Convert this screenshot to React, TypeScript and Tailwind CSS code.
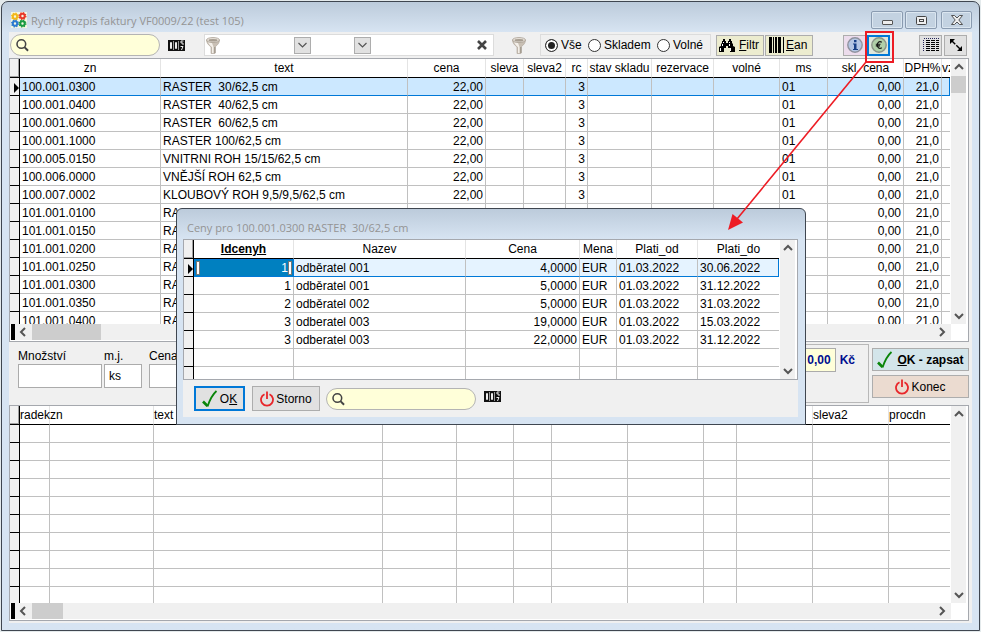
import React from 'react';

const FONT = "font-['Liberation_Sans',Arial,sans-serif]";

type Col = { name: string; w?: string; align?: string; head?: string };

const ITEM_COLS: Col[] = [
  { name: 'zn', w: 'w-[141px]' },
  { name: 'text' },
  { name: 'cena', w: 'w-[78px]', align: 'text-right' },
  { name: 'sleva', w: 'w-[38px]' },
  { name: 'sleva2', w: 'w-[42px]' },
  { name: 'rc', w: 'w-[22px]', align: 'text-right' },
  { name: 'stav skladu', w: 'w-[64px]' },
  { name: 'rezervace', w: 'w-[62px]' },
  { name: 'volné', w: 'w-[66px]' },
  { name: 'ms', w: 'w-[48px]' },
  { name: 'skl. cena', w: 'w-[76px]', align: 'text-right' },
  { name: 'DPH%', w: 'w-[38px]', align: 'text-right' },
  { name: 'vz', w: 'w-[8px]', head: 'text-left' },
];

type Item = { zn: string; text: string; cena?: string; rc?: string; ms?: string };

const ITEMS: Item[] = [
  { zn: '100.001.0300', text: 'RASTER  30/62,5 cm', cena: '22,00', rc: '3', ms: '01' },
  { zn: '100.001.0400', text: 'RASTER  40/62,5 cm', cena: '22,00', rc: '3', ms: '01' },
  { zn: '100.001.0600', text: 'RASTER  60/62,5 cm', cena: '22,00', rc: '3', ms: '01' },
  { zn: '100.001.1000', text: 'RASTER 100/62,5 cm', cena: '22,00', rc: '3', ms: '01' },
  { zn: '100.005.0150', text: 'VNITRNI ROH 15/15/62,5 cm', cena: '22,00', rc: '3', ms: '01' },
  { zn: '100.006.0000', text: 'VNĚJŠÍ ROH 62,5 cm', cena: '22,00', rc: '3', ms: '01' },
  { zn: '100.007.0002', text: 'KLOUBOVÝ ROH 9,5/9,5/62,5 cm', cena: '22,00', rc: '3', ms: '01' },
  { zn: '101.001.0100', text: 'RA' },
  { zn: '101.001.0150', text: 'RA' },
  { zn: '101.001.0200', text: 'RA' },
  { zn: '101.001.0250', text: 'RA' },
  { zn: '101.001.0300', text: 'RA' },
  { zn: '101.001.0350', text: 'RA' },
  { zn: '101.001.0400', text: 'RA' },
];

const ITEM_ROWS = ITEMS.map(({ zn, text, cena = '', rc = '', ms = '' }) => [
  zn, text, cena, '', '', rc, '', '', '', ms, '0,00', '21,0', '',
]);

const LINE_COLS: Col[] = [
  { name: 'radek', w: 'w-[30px]', head: 'text-left' },
  { name: 'zn', w: 'w-[104px]', head: 'text-left' },
  { name: 'text', head: 'text-left' },
  { name: '', w: 'w-[74px]' },
  { name: '', w: 'w-[57px]' },
  { name: '', w: 'w-[38px]' },
  { name: '', w: 'w-[76px]' },
  { name: '', w: 'w-[76px]' },
  { name: '', w: 'w-[33px]' },
  { name: '', w: 'w-[76px]' },
  { name: 'sleva2', w: 'w-[76px]', head: 'text-left' },
  { name: 'procdn', w: 'w-[61px]', head: 'text-left' },
];

const LINE_ROWS = Array.from({ length: 10 }, () => LINE_COLS.map(() => ''));

const PRICE_COLS: Col[] = [
  { name: 'Idcenyh', w: 'w-[100px]', align: 'text-right', head: 'text-center font-bold underline' },
  { name: 'Nazev' },
  { name: 'Cena', w: 'w-[114px]', align: 'text-right' },
  { name: 'Mena', w: 'w-[37px]' },
  { name: 'Plati_od', w: 'w-[81px]' },
  { name: 'Plati_do', w: 'w-[81px]' },
];

const PRICE_ROWS = [
  ['1', 'odběratel 001', '4,0000', 'EUR', '01.03.2022', '30.06.2022'],
  ['1', 'odběratel 001', '5,0000', 'EUR', '01.03.2022', '31.12.2022'],
  ['2', 'odběratel 002', '5,0000', 'EUR', '01.03.2022', '31.03.2022'],
  ['3', 'odberatel 003', '19,0000', 'EUR', '01.03.2022', '15.03.2022'],
  ['3', 'odberatel 003', '22,0000', 'EUR', '01.03.2022', '31.12.2022'],
  ['', '', '', '', '', ''],
  ['', '', '', '', '', ''],
];

function Chevron({ dir }: { dir: 'up' | 'down' | 'left' | 'right' }) {
  const d = {
    up: 'M1 7l4-4 4 4',
    down: 'M1 3l4 4 4-4',
    left: 'M7 1L3 5l4 4',
    right: 'M3 1l4 4-4 4',
  }[dir];
  return (
    <svg width="10" height="10" viewBox="0 0 10 10" fill="none" stroke="#555" strokeWidth="2">
      <path d={d} />
    </svg>
  );
}

function Grid({
  cols,
  rows,
  label,
  selected,
  editing,
  thumbV,
  hscroll,
}: {
  cols: Col[];
  rows: string[][];
  label: string;
  selected?: string;
  editing?: boolean;
  thumbV?: boolean;
  hscroll?: string;
}) {
  return (
    <div className="flex min-h-0 flex-1 flex-col border border-[#a5a8ae] bg-white">
      <div className="flex min-h-0 flex-1">
        <div className="min-w-0 flex-1 overflow-hidden">
          <table aria-label={label} className="w-full table-fixed border-separate border-spacing-0">
            <colgroup>
              <col className="w-[10px]" />
              {cols.map((c, i) => (
                <col key={i} className={c.w} />
              ))}
            </colgroup>
            <thead>
              <tr>
                <th className="h-[19px] border-b border-r border-black bg-[#f0f0f0] p-0 shadow-[inset_-1px_-1px_0_#a0a0a0]" />
                {cols.map((c, i) => (
                  <th
                    key={i}
                    className={`h-[19px] overflow-visible border-b border-b-black p-0 leading-[18px] whitespace-nowrap ${
                      i < cols.length - 1 ? 'border-r border-r-[#e4e4e4]' : ''
                    } ${c.head?.includes('bold') ? '' : 'font-normal'} ${c.head ?? 'text-center'}`}
                  >
                    {c.name}
                  </th>
                ))}
              </tr>
            </thead>
            <tbody>
              {rows.map((r, ri) => {
                const on = ri === 0 && selected;
                return (
                  <tr key={ri} className={on ? selected : ''}>
                    <td className="h-[18px] border-b border-r border-black bg-[#f0f0f0] p-0">
                      {on ? (
                        <svg width="9" height="13" viewBox="0 0 9 13" className="block">
                          <path d="M4 3l5 5-5 5z" fill="#000" />
                        </svg>
                      ) : null}
                    </td>
                    {r.map((v, i) => {
                      const edit = on && editing && i === 0;
                      return (
                        <td
                          key={i}
                          className={`h-[18px] overflow-hidden leading-[15px] whitespace-pre ${
                            edit
                              ? 'border border-[#0078d7] bg-[#0080c0] p-0 text-white'
                              : `border-b px-[2px] pt-[2px] pb-0 ${on ? 'border-b-[#0078d7]' : 'border-b-[#c0c0c0]'} ${
                                  i < cols.length - 1
                                    ? 'border-r border-r-[#c0c0c0]'
                                    : on
                                      ? 'border-r border-r-[#0078d7]'
                                      : ''
                                }`
                          } ${cols[i].align ?? ''}`}
                        >
                          {edit ? (
                            <span className="flex h-4 items-center justify-between px-px">
                              <span className="h-[14px] w-1 border border-[#777] bg-white" />
                              <span className="flex items-center">
                                {v}
                                <span className="h-[14px] w-1 border border-[#777] bg-white" />
                              </span>
                            </span>
                          ) : (
                            v
                          )}
                        </td>
                      );
                    })}
                  </tr>
                );
              })}
            </tbody>
          </table>
        </div>
        <div className="mr-[2px] ml-px flex w-[15px] shrink-0 flex-col items-center justify-between bg-[#f0f0f0] py-[3px]">
          <div className="flex w-full flex-col items-center gap-1">
            <Chevron dir="up" />
            {thumbV ? <div className="h-[17px] w-full bg-[#cdcdcd]" /> : null}
          </div>
          <Chevron dir="down" />
        </div>
      </div>
      {hscroll ? (
        <div className="mb-px flex h-4 shrink-0 items-stretch pr-[17px] pl-px">
          <div className="w-1 bg-black" />
          <div className="flex flex-1 items-center justify-between bg-[#f0f0f0] pr-1 pl-[3px]">
            <div className="flex h-full items-center gap-1">
              <Chevron dir="left" />
              <div className={`h-full bg-[#cdcdcd] ${hscroll}`} />
            </div>
            <Chevron dir="right" />
          </div>
        </div>
      ) : null}
    </div>
  );
}

function Search({ label }: { label: string }) {
  return (
    <label className="flex h-[22px] w-[150px] items-center rounded-full border border-[#b4b4b4] bg-[#ffffd9] pl-[5px]">
      <svg width="14" height="14" viewBox="0 0 14 14" fill="none" stroke="#444" strokeWidth="1.7">
        <circle cx="5.9" cy="5.9" r="4.8" />
        <path d="M9.300 9.300l4 4" strokeWidth="2.200" />
      </svg>
      <input aria-label={label} className="w-full bg-transparent px-1 outline-none" />
    </label>
  );
}

function Counter() {
  return (
    <svg width="17" height="11" viewBox="0 0 17 11" fill="none">
      <path d="M0 0h17v11H0z" fill="#111" />
      <path d="M2.500 2.500h1v6h-1zM7.500 2.500h1v6h-1z" stroke="#eee" />
      <path d="M5.500 1v9M10.500 1v9" stroke="#999" />
      <path d="M15.500 1h-2.500v2h2v2M12.500 6.500h2.500L13.500 10" stroke="#eee" />
    </svg>
  );
}

function Funnel() {
  return (
    <svg width="14" height="17" viewBox="0 0 14 17">
      <path d="M.5 3c0 3 2 5 4.500 7v6.500h4V10c2.500-2 4.500-4 4.500-7z" fill="#c9c0b5" stroke="#aca397" strokeWidth=".6" />
      <path d="M2 5c1 2.500 2.500 4 4 5v6h1.500V10L6 6z" fill="#f3efe9" />
      <path d="M9 10v6" stroke="#8d8478" />
      <ellipse cx="7" cy="3" rx="6.500" ry="2.500" fill="#e6e0d8" stroke="#a39a8e" strokeWidth=".7" />
      <ellipse cx="7" cy="3.200" rx="4.500" ry="1.300" fill="#a79e92" />
    </svg>
  );
}

function Check() {
  return (
    <svg width="16" height="18" viewBox="0 0 16 18" fill="none" stroke="#0a850a">
      <path d="M1 11.500l4.500 4.500" strokeWidth="2.600" />
      <path d="M5.500 16.500C7 12 10 5 14.500 1" strokeWidth="1.800" />
    </svg>
  );
}

function Power() {
  return (
    <svg width="14" height="16" viewBox="0 0 14 16" fill="none" stroke="#e8262a" strokeWidth="1.800">
      <path d="M4.500 3.200a6 6 0 1 0 5 0" />
      <path d="M7 .5v7.500" />
    </svg>
  );
}

function Gear({ x, y, c }: { x: number; y: number; c: string }) {
  return (
    <g transform={`translate(${x} ${y})`} fill="none" stroke={c}>
      <circle r="2.200" strokeWidth="2" />
      <circle r="3.300" strokeWidth="1.400" strokeDasharray="1.300 1.292" />
    </g>
  );
}

function DropButton({ label }: { label: string }) {
  return (
    <button aria-label={label} className="flex h-[17px] w-[17px] items-center justify-center border border-[#adadad] bg-[#e1e1e1]">
      <svg width="9" height="6" viewBox="0 0 9 6" fill="none" stroke="#555" strokeWidth="1.200">
        <path d="M.5 1l4 4 4-4" />
      </svg>
    </button>
  );
}

function Radio({ text, on }: { text: string; on?: boolean }) {
  return (
    <label className="flex items-center gap-[3px]">
      <input
        type="radio"
        name="stock"
        defaultChecked={on}
        className="h-[13px] w-[13px] appearance-none rounded-full border border-[#333] bg-white checked:bg-[#222] checked:shadow-[inset_0_0_0_2px_#fff]"
      />
      {text}
    </label>
  );
}

const WIN_BTN =
  'flex h-[18px] items-center justify-center rounded-[2px] border border-[#8a9bb0] bg-[#c3d2e1] shadow-[inset_0_0_0_1px_#dbe6f0]';

function PriceDialog() {
  return (
    <section
      aria-label="Ceny"
      className="absolute top-[208px] left-[176px] flex h-[217px] w-[630px] flex-col rounded-t-[6px] border border-[#3f4650] bg-[#d7e4f2] bg-linear-to-b from-[#bccbdb] to-[#d7e4f2] to-[30px] pr-[7px] pb-[7px] pl-[6px]"
    >
      <h2 className="h-[30px] shrink-0 pt-[2px] pl-1 font-['Open_Sans',sans-serif] text-[11px] leading-[34px] whitespace-pre text-[#949494]">
        Ceny pro 100.001.0300 RASTER  30/62,5 cm
      </h2>
      <div className="flex min-h-0 flex-1 flex-col bg-[#f0f0f0]">
        <div className="flex h-[141px] flex-col">
          <Grid cols={PRICE_COLS} rows={PRICE_ROWS} label="Ceny" selected="bg-[#e5f3ff]" editing />
        </div>
        <div className="flex items-center pt-[6px] pl-[11px]">
          <button className="flex h-[25px] w-[51px] items-center justify-center gap-[2px] border-2 border-[#0078d7] bg-[#e1e1e1]">
            <Check />
            <span>
              O<u>K</u>
            </span>
          </button>
          <button className="ml-[7px] flex h-[25px] w-[68px] items-center justify-center gap-[2px] border border-[#adadad] bg-[#e1e1e1]">
            <Power />
            Storno
          </button>
          <div className="ml-[6px]">
            <Search label="Hledat cenu" />
          </div>
          <div className="ml-2 pb-1">
            <Counter />
          </div>
        </div>
      </div>
    </section>
  );
}

export default function App() {
  return (
    <div className={`relative flex h-screen flex-col bg-[#e4eaec] p-px text-[12px] leading-4 text-black ${FONT}`}>
      <main className="flex min-h-0 flex-1 flex-col rounded-t-[7px] border border-[#3f4650] bg-[#d7e4f2] bg-linear-to-b from-[#bccbdb] to-[#d7e4f2] to-[30px] px-[7px] pb-[7px]">
        <header className="flex h-[30px] shrink-0 items-start pl-[2px]">
          <svg width="16" height="16" viewBox="0 0 16 16" className="mt-[10px]">
            <path d="M0 0h16v16H0z" fill="#f4f6e0" />
            <Gear x={4} y={4.5} c="#f2b81a" />
            <Gear x={11.5} y={4} c="#e8382a" />
            <Gear x={4} y={11.5} c="#2c7ad0" />
            <Gear x={11.5} y={11.5} c="#199a43" />
          </svg>
          <h1 className="ml-1 pt-[10px] font-['Open_Sans',sans-serif] text-[11px] leading-[18px] text-[#949494]">
            Rychlý rozpis faktury VF0009/22 (test 105)
          </h1>
          <div className="mt-[9px] ml-auto flex">
            <button aria-label="Minimalizovat" className={`${WIN_BTN} w-[32px]`}>
              <span className="mt-1 h-[5px] w-[11px] rounded-[1px] border border-[#555] bg-[#eee]" />
            </button>
            <button aria-label="Maximalizovat" className={`${WIN_BTN} ml-[2px] w-[32px]`}>
              <svg width="11" height="9" viewBox="0 0 11 9" fill="#eee" stroke="#444">
                <rect x=".5" y=".5" width="10" height="8" rx="1" />
                <rect x="3.500" y="3.500" width="4" height="2" />
              </svg>
            </button>
            <button aria-label="Zavřít" className={`${WIN_BTN} ml-1 w-[31px]`}>
              <svg width="12" height="10" viewBox="0 0 12 10" fill="#eee" stroke="#444" strokeWidth=".9">
                <path d="M.5.5h3L6 3 8.500.5h3L7.800 5l3.700 4.500h-3L6 7 3.500 9.500h-3L4.200 5z" />
              </svg>
            </button>
          </div>
        </header>

        <div className="flex min-h-0 flex-1 flex-col bg-[#f0f0f0] pr-[3px] pb-[2px]">
          <div className="flex h-[26px] shrink-0 items-center pr-[2px] pl-px">
            <Search label="Hledat" />
            <div className="ml-2">
              <Counter />
            </div>
            <div className="ml-[19px] flex h-[22px] w-[290px] items-center border border-[#dcdcdc] bg-white pl-px">
              <Funnel />
              <div className="ml-[74px]">
                <DropButton label="Pole" />
              </div>
              <div className="ml-[43px]">
                <DropButton label="Podmínka" />
              </div>
              <button aria-label="Zrušit filtr" className="mr-[6px] ml-auto">
                <svg width="10" height="10" viewBox="0 0 10 10" stroke="#444" strokeWidth="2.600">
                  <path d="M1 1l8 8M9 1L1 9" />
                </svg>
              </button>
            </div>
            <div className="ml-[18px]">
              <Funnel />
            </div>
            <div className="ml-[14px] flex h-[22px] w-[171px] items-center justify-between border border-[#dcdcdc] pr-[7px] pl-1">
              <Radio text="Vše" on />
              <Radio text="Skladem" />
              <Radio text="Volné" />
            </div>
            <button className="ml-[5px] flex h-[21px] w-[48px] items-center gap-1 border border-[#adadad] bg-[#ececcf] pl-[2px]">
              <svg width="16" height="13" viewBox="0 0 16 13">
                <path d="M4 0h2v2h1v2h2V2h1V0h2v2h1v2l1 1v2l2 1v5h-5V9H9V7H7v2H5v4H0V8l2-1V5l1-1V2h1z" />
                <path d="M1.500 9v3M11.500 9v3M4.500 3v1M3.500 5v2M10.500 3v1M10.500 5v2" stroke="#fff" />
              </svg>
              <span>
                <u>F</u>iltr
              </span>
            </button>
            <button className="ml-px flex h-[21px] w-[48px] items-center gap-[2px] border border-[#adadad] bg-[#ececcf] pl-[3px]">
              <svg width="15" height="16" viewBox="0 0 15 16">
                <path d="M0 0h3v16H0zM4 0h1v16H4zM6 0h2v16H6zM9 0h3v16H9zM14 0h1v16h-1z" />
              </svg>
              <span>
                <u>E</u>an
              </span>
            </button>
            <div className="ml-auto flex">
              <button aria-label="Informace" className="flex h-[21px] w-[23px] items-center justify-center border border-[#adadad] bg-[#ecdcec]">
                <svg width="16" height="16" viewBox="0 0 16 16">
                  <circle cx="8" cy="8" r="7.200" fill="#b4c6e4" stroke="#8f929e" strokeWidth="1.400" />
                  <path d="M7 3h2.500v2.200H7zM6 6.500h3.500V12H11v1H6v-1h1V7.500H6z" fill="#173f86" />
                </svg>
              </button>
              <button aria-label="Ceny v měně" className="ml-px flex h-[21px] w-[23px] items-center justify-center border-2 border-[#0078d7] bg-[#dfe8dc]">
                <svg width="16" height="16" viewBox="0 0 16 16">
                  <circle cx="8" cy="8" r="7.200" fill="#b0cfa8" stroke="#8a9488" strokeWidth="1.400" />
                  <path d="M10.800 5.200C8.500 3.800 6.300 5 6.300 8s2.200 4.200 4.500 2.800M4.800 7.300h4.700M4.800 8.900h4.200" fill="none" stroke="#111" strokeWidth="1.100" />
                </svg>
              </button>
              <button aria-label="Sestava" className="ml-[29px] flex h-[21px] w-[23px] items-center justify-center border border-[#adadad] bg-[#e1e1e1]">
                <svg width="16" height="14" viewBox="0 0 16 14" stroke="#000">
                  <path d="M1 .5h15" stroke="#225" strokeDasharray="1 1" />
                  <path d="M3 2.500h13M3 4.500h13M3 6.500h13M3 8.500h13M3 10.500h13M3 12.500h13" strokeDasharray="4 1" />
                  <path d="M.5 2v12" stroke="#225" strokeDasharray="1 1" />
                </svg>
              </button>
              <button aria-label="Zvětšit" className="ml-[2px] flex h-[21px] w-[23px] items-center justify-center border border-[#adadad] bg-[#e1e1e1]">
                <svg width="12" height="12" viewBox="0 0 12 12">
                  <path d="M0 0h5L0 5zM12 12H7l5-5z" />
                  <path d="M1 1l10 10" stroke="#000" strokeWidth="1.400" strokeDasharray="6 1.500" />
                </svg>
              </button>
            </div>
          </div>

          <div className="flex min-h-0 flex-[284_284_0%] flex-col">
            <Grid cols={ITEM_COLS} rows={ITEM_ROWS} label="Položky" selected="bg-[#cce8ff]" thumbV hscroll="w-[69px]" />
          </div>

          <div className="flex h-[63px] shrink-0 items-start pl-[9px]">
            <label className="flex w-[84px] flex-col pt-[6px]">
              Množství
              <input className="h-6 w-full border border-[#ababab] bg-white px-1" />
            </label>
            <label className="ml-[2px] flex w-[38px] flex-col pt-[6px]">
              m.j.
              <input defaultValue="ks" className="h-6 w-full border border-[#ababab] bg-white px-1" />
            </label>
            <label className="ml-[7px] flex w-[84px] flex-col pt-[6px]">
              Cena
              <input className="h-6 w-full border border-[#ababab] bg-white px-1" />
            </label>
            <div className="mt-[2px] ml-auto flex h-[59px] w-[160px] items-start justify-end border border-[#b8b8b8] pt-[3px] pr-[13px] font-bold text-[#000f8f]">
              <label className="flex items-center gap-1">
                <input defaultValue="0,00" className="h-[24px] w-[80px] border border-[#ababab] bg-[#ffffd9] px-1 text-right" />
                Kč
              </label>
            </div>
            <div className="ml-[3px] flex w-[97px] flex-col gap-1 pt-[6px]">
              <button className="flex h-[23px] items-center justify-center gap-1 border border-[#adadad] bg-[#d3e5ea] font-bold">
                <Check />
                <span>
                  <u>O</u>K - zapsat
                </span>
              </button>
              <button className="flex h-[23px] items-center justify-center gap-[2px] border border-[#adadad] bg-[#ebdbd0]">
                <Power />
                Konec
              </button>
            </div>
          </div>

          <div className="flex min-h-0 flex-[216_216_0%] flex-col">
            <Grid cols={LINE_COLS} rows={LINE_ROWS} label="Řádky faktury" hscroll="w-[31px]" />
          </div>
        </div>
      </main>

      <PriceDialog />

      <svg width="166" height="200" viewBox="0 0 166 200" className="pointer-events-none absolute top-[31px] right-[87px]">
        <rect x="138" y="1" width="27" height="30" fill="none" stroke="#ed1c24" strokeWidth="2" />
        <path d="M138 31L9 188" stroke="#ed1c24" strokeWidth="1.600" />
        <path d="M0 199l4.500-16 10.500 8.500z" fill="#ed1c24" />
      </svg>
    </div>
  );
}
